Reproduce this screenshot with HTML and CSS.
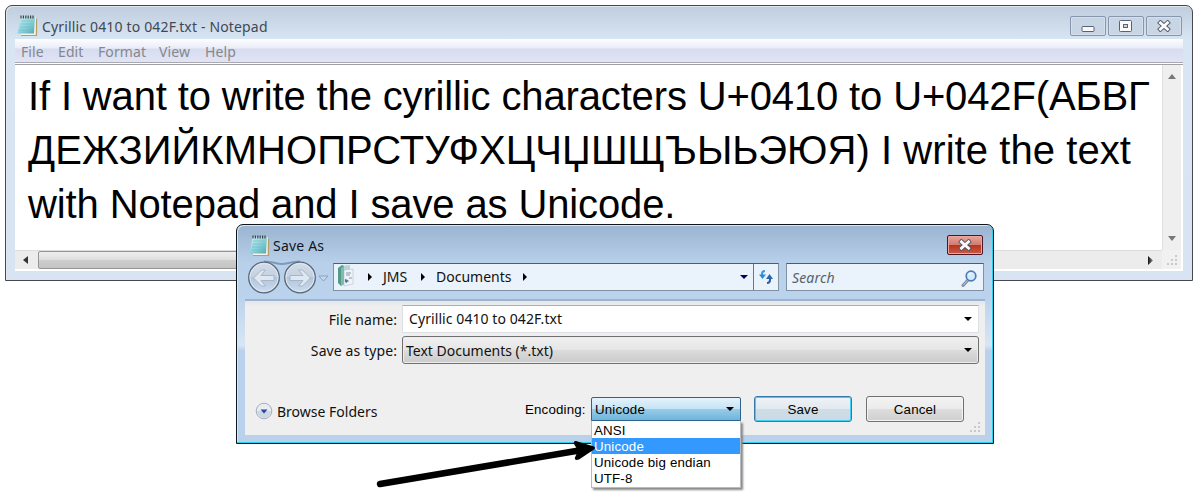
FILE: index.html
```
<!DOCTYPE html>
<html lang="en">
<head>
<meta charset="utf-8">
<title>Notepad</title>
<link rel="stylesheet" href="styles.css">
</head>
<body>
<svg width="0" height="0" class="defs">
  <defs>
    <linearGradient id="pad" x1="0" y1="0" x2="1" y2="1"><stop offset="0" stop-color="#d3f1f3"/><stop offset=".5" stop-color="#8fd3da"/><stop offset="1" stop-color="#4fa9b8"/></linearGradient>
    <linearGradient id="disc" x1="0" y1="0" x2="0" y2="1"><stop offset="0" stop-color="#d3dde8"/><stop offset=".48" stop-color="#c4d1e0"/><stop offset=".5" stop-color="#b3c5da"/><stop offset="1" stop-color="#cbdcf0"/></linearGradient>
    <linearGradient id="tri" x1="0" x2="1"><stop offset="0" stop-color="#111"/><stop offset="1" stop-color="#888"/></linearGradient>
    <symbol id="notepad" viewBox="0 0 21 22">
      <path d="M4 20.5h15.5V3.5" fill="none" stroke="#b69c69" stroke-width="1.2"/>
      <path d="M3.5 2H18.8L18.5 20H4z" fill="#f5f4e8"/>
      <path d="M3.6 2H18L17 18.5H.5z" fill="url(#pad)"/>
      <path d="M4 6h12M3.5 9h12M3 12h12M2.5 15h12" stroke="#6fbfca" stroke-width=".7"/>
      <path d="M4 .5v3M6.4 .5v3M8.8 .5v3M11.2 .5v3M13.6 .5v3M16 .5v3" stroke="#3c4448" stroke-width="1.2"/>
    </symbol>
    <symbol id="cross" viewBox="0 0 14 12">
      <path d="M3.4 2.8l7.2 6.4M10.6 2.8l-7.2 6.4" stroke="#4d5565" stroke-width="4.6" stroke-linecap="square"/>
      <path d="M3.4 2.8l7.2 6.4M10.6 2.8l-7.2 6.4" stroke="#fafafa" stroke-width="2.8" stroke-linecap="square"/>
    </symbol>
    <symbol id="grip" viewBox="0 0 12 12"><path d="M9 1h2v2h-2zM5 5h2v2h-2zM9 5h2v2h-2zM1 9h2v2h-2zM5 9h2v2h-2zM9 9h2v2h-2z" fill="#c9c9cb"/></symbol>
    <symbol id="down" viewBox="0 0 8 4"><path d="M0 0h8L4 4z"/></symbol>
    <symbol id="right" viewBox="0 0 4 8"><path d="M0 0v8l4-4z"/></symbol>
  </defs>
</svg>

<main class="desktop">
  <section class="window notepad">
    <header class="titlebar">
      <svg class="app-icon"><use href="#notepad"/></svg>
      <span class="caption">Cyrillic 0410 to 042F.txt - Notepad</span>
      <div class="controls">
        <span class="control"><svg width="14" height="12"><rect x="1" y="6.5" width="12" height="5" rx="1" fill="#fafafa" stroke="#596174"/></svg></span>
        <span class="control"><svg width="14" height="12"><rect x=".5" y=".5" width="12" height="11" rx="1" fill="#fafafa" stroke="#596174"/><rect x="4.5" y="4.5" width="4" height="3" fill="#ccd6e4" stroke="#596174"/></svg></span>
        <span class="control"><svg width="14" height="12"><use href="#cross"/></svg></span>
      </div>
    </header>
    <div class="client">
      <nav class="menubar"><span class="m-file">File</span><span class="m-edit">Edit</span><span class="m-format">Format</span><span class="m-view">View</span><span class="m-help">Help</span></nav>
      <div class="editor">
        <div class="text">
          <div class="l1">If I want to write the cyrillic characters U+0410 to U+042F(АБВГ</div>
          <div class="l2">ДЕЖЗИЙКМНОПРСТУФХЦЧЏШЩЪЫЬЭЮЯ) I write the text</div>
          <div class="l3">with Notepad and I save as Unicode.</div>
        </div>
        <div class="vscroll">
          <svg width="8" height="5"><path d="M0 5h8L4 0z" fill="#777"/></svg>
          <svg width="8" height="5"><path d="M0 0h8L4 5z" fill="#777"/></svg>
        </div>
        <div class="hscroll">
          <svg width="5" height="8"><path d="M5 0v8L0 4z" fill="#333"/></svg>
          <div class="thumb"></div>
          <svg width="5" height="9"><path d="M0 0v9l5-4.5z" fill="url(#tri)"/></svg>
        </div>
        <div class="corner"><svg width="12" height="12"><use href="#grip"/></svg></div>
      </div>
    </div>
  </section>

  <section class="window dialog">
    <header class="titlebar">
      <svg class="app-icon"><use href="#notepad"/></svg>
      <span class="caption">Save As</span>
      <span class="close"><svg width="14" height="12"><use href="#cross"/></svg></span>
    </header>
    <div class="navrow">
      <svg class="travel" width="84" height="36" viewBox="0 0 84 36">
        <path d="M17 1.500C27 1.500 29 4 35 4s8-2.500 18-2.500" fill="none" stroke="#8099b6" stroke-width="2"/>
        <g fill="url(#disc)" stroke="#58687c" stroke-width="1.3"><circle cx="17" cy="17.500" r="15.300"/><circle cx="53" cy="17.500" r="15.300"/></g>
        <g fill="none" stroke="#e1e8f1" stroke-width="1"><circle cx="17" cy="17.500" r="14"/><circle cx="53" cy="17.500" r="14"/></g>
        <g fill="#dfe7f1" stroke="#a6b6ca" stroke-width="1"><path d="M6.500 18l8-8h4l-4.500 5.500h13v5H14l4.500 5.500h-4z"/><path d="M63.500 18l-8-8h-4l4.500 5.500H43v5h13L51.500 26h4z"/></g>
        <path d="M72 16h9l-4.500 5z" fill="#c8d9ed" stroke="#8aa2c0"/>
      </svg>
      <div class="address">
        <svg class="folder" width="17" height="22" viewBox="0 0 17 22"><path d="M4 1l9-1v17l-9 2z" fill="#b7d2da"/><path d="M7 5l9-1v15l-9 2z" fill="#eff3f6" stroke="#b7c1cb" stroke-width=".6"/><path d="M9 8h5M9 10h4M12 13h3M8 16h4" stroke="#8794ac"/><path d="M8 14l3 1-1 3-2-1z" fill="#506eaa"/><path d="M1 3l4-3 2 1v18l-3 2-3-3z" fill="#529b8a"/><path d="M4 3l3-2v18l-3 2z" fill="#83bbab"/></svg>
        <svg class="c1" width="4" height="8"><use href="#right"/></svg>
        <span class="crumb jms">JMS</span>
        <svg class="c2" width="4" height="8"><use href="#right"/></svg>
        <span class="crumb docs">Documents</span>
        <svg class="c3" width="4" height="8"><use href="#right"/></svg>
        <svg class="drop" width="8" height="4" fill="#000060"><use href="#down"/></svg>
        <span class="refresh"><svg width="14" height="14" viewBox="0 0 14 14"><path d="M6 1Q3 1 3 4v1" fill="none" stroke="#3a9ae0" stroke-width="2"/><path d="M0 4.500h7L3.500 9z" fill="#2d89d5"/><path d="M8 13q3 0 3-3V8" fill="none" stroke="#285da5" stroke-width="2"/><path d="M7 9h7l-3.500-5z" fill="#2b65b1"/></svg></span>
      </div>
      <div class="search"><span>Search</span><svg width="17" height="17" viewBox="0 0 17 17"><path d="M7 10l-5 5.500" stroke="#78899b" stroke-width="3" stroke-linecap="round"/><path d="M7 10l-5 5.500" stroke="#c3d0dc" stroke-width="1"/><circle cx="10" cy="6" r="4.800" fill="#d5e9fa" stroke="#487eb7" stroke-width="1.700"/><path d="M7.500 5q.5-2 3-2" fill="none" stroke="#fff"/></svg></div>
    </div>
    <div class="form">
      <div class="field"><label><span class="lb-name">File name:</span></label><div class="input"><span class="v-name">Cyrillic 0410 to 042F.txt</span><svg width="8" height="4"><use href="#down"/></svg></div></div>
      <div class="field"><label><span class="lb-type">Save as type:</span></label><div class="select"><span class="v-type">Text Documents (*.txt)</span><svg width="8" height="4"><use href="#down"/></svg></div></div>
      <div class="actions">
        <svg width="18" height="18" viewBox="0 0 18 18"><circle cx="9" cy="9" r="7.800" fill="#e9edf2" stroke="#a6afbf"/><path d="M2 9h14a7 7 0 0 1-14 0" fill="#ccd7e3"/><path d="M5.500 7.500h7L9 11.500z" fill="#2845a3"/></svg>
        <span class="browse">Browse Folders</span>
        <span class="enc-label">Encoding:</span>
        <div class="encoding"><span class="v-enc">Unicode</span><svg width="8" height="4"><use href="#down"/></svg>
          <ul class="options"><li><span class="o1">ANSI</span></li><li class="selected"><span class="o2">Unicode</span></li><li><span class="o3">Unicode big endian</span></li><li><span class="o4">UTF-8</span></li></ul>
        </div>
        <span class="button save"><span>Save</span></span>
        <span class="button cancel"><span>Cancel</span></span>
      </div>
      <svg class="grip" width="12" height="12"><use href="#grip"/></svg>
    </div>
  </section>

  <svg class="pointer" width="220" height="54" viewBox="375 438 220 54"><path d="M380 484L582 450" stroke="#000" stroke-width="6.500" stroke-linecap="round"/><path d="M576 441L594 446.500Q596 448 594 449.500L579 459.500Q574 461 575 457.500L578 450.500L574 444Q573 440.500 576 441z"/></svg>
</main>
</body>
</html>
```
FILE: styles.css
```
* { box-sizing: border-box; }
body { margin: 0; background: #fff; font-family: "Noto Sans", "Open Sans", sans-serif; font-size: 14px; color: #111; }
svg { display: block; flex: none; }
.defs { position: absolute; }
.desktop { position: relative; width: 1200px; height: 493px; overflow: hidden; }
.desktop span, .text div { white-space: nowrap; }
.window { position: absolute; border: 1px solid #45484e; }
.titlebar { display: flex; }
.app-icon { width: 21px; height: 22px; }

.notepad { left: 5px; top: 5px; width: 1188px; height: 276px; border-radius: 7px 7px 0 0; padding: 0 9px 0; background: linear-gradient(#c0cddd, #d8e5f3 34px, #d8e4f2); box-shadow: inset 1px 1px #dfe7f0; }
.notepad .titlebar { height: 33px; padding: 9px 1px 0 2px; }
.notepad .caption { margin-left: 4px; line-height: 23px; letter-spacing: .16px; color: #3f4853; }
.controls { display: flex; gap: 2px; margin-left: auto; }
.control { width: 36px; height: 20px; margin-top: 1px; border: 1px solid #8795ad; border-radius: 2px; background: #c8d5e5; box-shadow: inset 0 0 0 1px #d6e0ec; display: flex; align-items: center; justify-content: center; }
.client { background: #fff; height: 232px; }
.menubar { height: 24px; padding: 0 6px; display: flex; background: linear-gradient(#fcfdff, #e9edf7 9px, #d7dcf0 10px, #e1e4f5); border-bottom: 1px solid #a9a9b2; color: #85878c; line-height: 25px; letter-spacing: .1px; }
.menubar span { flex: none; }
.m-file { width: 37px; } .m-edit { width: 40px; } .m-format { width: 61px; } .m-view { width: 46px; }
.editor { margin-top: 1px; height: 207px; border-top: 1px solid #a0a0a0; display: grid; grid-template: 185px 19px / 1147px 19px; }
.text { padding: 4px 0 0 13px; font: 40px/54px "Liberation Sans", Arial, sans-serif; color: #000; overflow: hidden; }
.l1 { letter-spacing: -.14px; }
.l2 { letter-spacing: .06px; }
.l3 { letter-spacing: -.12px; }
.vscroll { background: #efefef; border-left: 1px solid #e0e0e0; display: flex; flex-direction: column; justify-content: space-between; align-items: center; padding: 9px 0 9px; }
.hscroll { background: #ececec; display: flex; align-items: center; padding: 0 9px 0 8px; border-top: 1px solid #ddd; }
.thumb { width: 560px; height: 18px; margin: 0 auto 0 10px; border: 1px solid #949494; border-radius: 2px; background: linear-gradient(#eee, #dedede 48%, #cdcdcd 52%, #c4c4c4); }
.corner { background: #f1f1f1; display: flex; align-items: center; justify-content: center; }

.dialog { left: 236px; top: 224px; width: 758px; height: 220px; border-color: #10151a; border-radius: 7px 7px 0 0; padding: 0 8px 8px; background: linear-gradient(#9ab3d0, #b8d0ea 38px, #bbd3ed 74px, #d8e6f5 120px, #b9d1ea 126px); box-shadow: inset -1px -1px #29d1ec, inset 1px 1px #d6e7f5; display: flex; flex-direction: column; }
.dialog .titlebar { height: 35px; padding: 10px 2px 0 4px; }
.dialog .caption { margin-left: 3px; line-height: 22px; letter-spacing: .2px; color: #10151c; }
.close { margin-left: auto; width: 36px; height: 20px; border: 1px solid #4c1722; border-radius: 2px; background: linear-gradient(#e5a49c, #d47c70 48%, #b9351e 52%, #c95b45); box-shadow: inset 0 0 0 1px #e9a79d; display: flex; align-items: center; justify-content: center; }
.navrow { height: 39px; display: flex; align-items: flex-start; padding: 3px 1px 0 2px; }
.travel { margin-top: -3px; }
.address { margin-left: 2px; width: 446px; height: 28px; border: 1px solid #8291a2; border-top-color: #4e5b68; background: #eaf2fb; display: flex; align-items: center; }
.folder { margin: 0 14px 1px 3px; }
.jms { width: 28px; margin: 0 10px 0 11px; }
.docs { width: 76px; margin: 0 11px 0 11px; }
.drop { margin-left: auto; }
.refresh { margin-left: 5px; width: 25px; height: 26px; border-left: 1px solid #6a7786; display: flex; align-items: center; justify-content: center; }
.search { margin-left: 7px; width: 198px; height: 28px; border: 1px solid #8291a2; border-top-color: #4e5b68; background: #eaf2fb; display: flex; align-items: center; justify-content: space-between; padding: 0 5px; font-style: italic; color: #59616b; }
.search span { letter-spacing: .15px; position: relative; top: 1px; }
.search svg { margin-top: 3px; }
.form { position: relative; height: 137px; background: linear-gradient(#e3e6ea, #efefef 6px); border-top: 2px solid #9db4cf; padding-top: 4px; }
.field { height: 31px; display: flex; }
.field label { width: 152px; margin-right: 5px; line-height: 29px; display: flex; justify-content: flex-end; letter-spacing: .1px; }
.input, .select { width: 577px; height: 28px; display: flex; align-items: center; justify-content: space-between; padding: 0 6px; border: 1px solid #dcdfe4; border-top-color: #abadb3; background: #fff; }
.v-name { letter-spacing: .08px; }
.select { border: 1px solid #707070; border-radius: 3px; background: linear-gradient(#f0f0f0, #e6e6e6 48%, #dbdbdb 52%, #cbcbcb); padding: 0 6px 0 3px; box-shadow: inset 0 0 0 1px #ededed; }
.v-type { position: relative; top: 1px; }
.actions { display: flex; align-items: center; height: 26px; margin-top: 29px; padding-left: 10px; }
.browse { margin: 5px 0 0 4px; width: 101px; }
.actions > svg { margin-top: 4px; }
.enc-label { width: 66px; margin-left: 147px; }
.enc-label, .encoding, .button { font-family: "Liberation Sans", Arial, sans-serif; font-size: 13.33px; letter-spacing: .15px; color: #000; }
.enc-label, .v-enc, .button span { position: relative; top: 1px; }
.encoding { position: relative; width: 150px; height: 24px; border: 1px solid #2c628b; border-radius: 2px 2px 0 0; background: linear-gradient(#e5f3fb, #c5e4f5 48%, #98cbe7 52%, #6db5dc); display: flex; align-items: center; justify-content: space-between; padding: 0 6px 0 3px; }
.options { position: absolute; left: -1px; top: 23px; width: 150px; margin: 0; padding: 1px 0; background: #fff; border: 1px solid #b8bcc0; border-top: 0; box-shadow: 2px 2px 2px #888; list-style: none; }
.options li { height: 16px; line-height: 17px; padding-left: 2px; }
.options .selected { background: #3399ff; color: #fff; }
.button { width: 98px; height: 26px; border: 1px solid #707070; border-radius: 3px; background: linear-gradient(#f3f3f3, #ebebeb 48%, #dddddd 52%, #cfcfcf); box-shadow: inset 0 0 0 1px #f4f4f4; display: flex; justify-content: center; align-items: center; }
.save { margin-left: 13px; border-color: #347aab; box-shadow: inset 0 0 0 1px #43cdf3; background: linear-gradient(#eef3f6, #e1eaf0 48%, #cfdce5 52%, #c9dae4); }
.cancel { margin-left: 14px; }
.grip { position: absolute; right: 4px; bottom: 2px; }
.pointer { position: absolute; left: 375px; top: 438px; }
```
